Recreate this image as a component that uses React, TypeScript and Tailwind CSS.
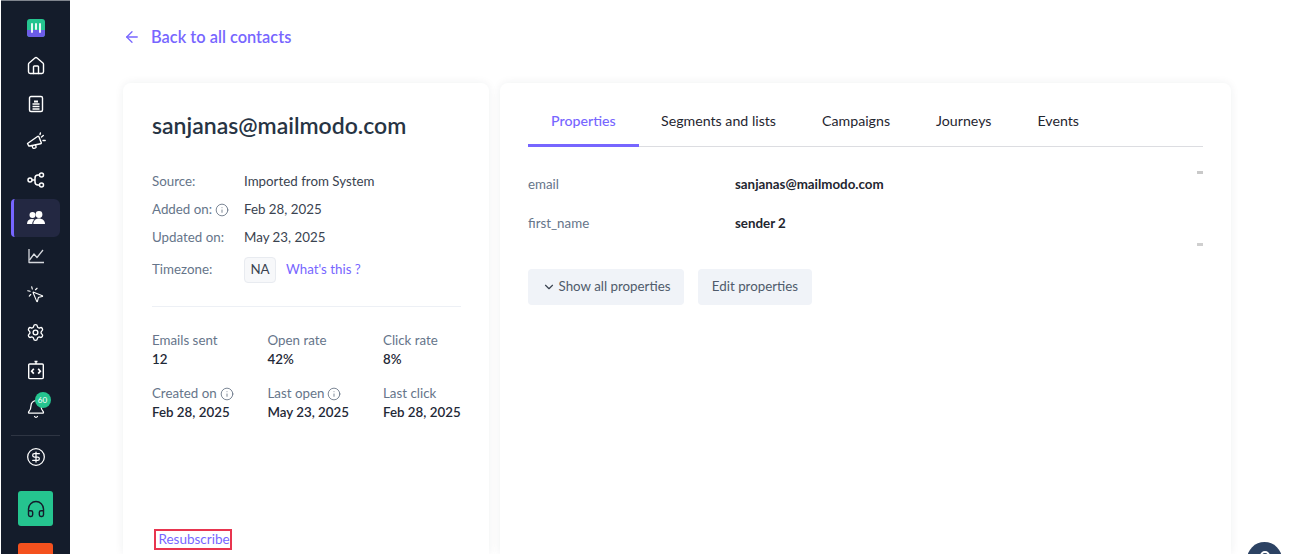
import {
  ArrowLeft,
  Bell,
  ChevronDown,
  CircleDollarSign,
  Headphones,
  House,
  Info,
  MousePointerClick,
  Settings,
} from "lucide-react";
import type { ReactNode } from "react";

function Logo() {
  return (
    <svg width="18" height="18" viewBox="0 0 18 18">
      <rect width="18" height="18" rx="3" fill="#25c48f" />
      <path d="M0 11h18v4a3 3 0 0 1-3 3H3a3 3 0 0 1-3-3z" fill="#6c5ce7" />
      <path d="M5 5v8M9 5v5M13 5v8" stroke="#fff" strokeWidth="1.8" strokeLinecap="round" />
    </svg>
  );
}

function NewsIcon() {
  return (
    <svg width="18" height="18" viewBox="0 0 18 18" fill="none" stroke="#fff" strokeWidth="1.4">
      <rect x="2.5" y="1.5" width="13" height="15" rx="1.5" />
      <path d="M5.5 9h7M5.5 11.5h7M5.5 14h7" />
      <path d="M7 6.5h4" strokeWidth="2" />
    </svg>
  );
}

function MegaphoneIcon() {
  return (
    <svg width="20" height="20" viewBox="0 0 20 20" fill="none" stroke="#fff" strokeWidth="1.4" strokeLinejoin="round" strokeLinecap="round">
      <path d="M1.5 11.5 11.5 4.5q1-.6 1.5.5l2.200 5.500q.4 1-.7 1.200L4 14q-1 .2-1.500-.5z" />
      <path d="M6 13.5l.8 2.300q.3.800 1.200.5l1.500-.5q.8-.3.500-1.200l-.5-1.600" />
      <path d="M15.5 5l1.800-1.500M17 8.500h2.200M14 2.500l.4-1.500" />
    </svg>
  );
}

function FlowIcon() {
  return (
    <svg width="18" height="18" viewBox="0 0 18 18" fill="none" stroke="#fff" strokeWidth="1.5">
      <circle cx="3" cy="9" r="2" />
      <circle cx="14.5" cy="4" r="2" />
      <circle cx="14.5" cy="14" r="2" />
      <path d="M5 9h3M12.5 4H11a3 3 0 0 0-3 3v4a3 3 0 0 0 3 3h1.500" />
    </svg>
  );
}

function UsersIcon() {
  return (
    <svg width="18" height="18" viewBox="0 0 18 18" fill="#fff">
      <circle cx="5.5" cy="6" r="3" />
      <circle cx="12" cy="5.5" r="3.4" />
      <path d="M0 15c0-3.2 2-5 5-5 1 0 1.700.2 2.400.6C6 11.700 5.300 13.200 5.300 15z" />
      <path d="M6.3 15c0-3.2 2.400-5.400 5.700-5.400S18 11.800 18 15z" />
    </svg>
  );
}

function ChartIcon() {
  return (
    <svg width="20" height="20" viewBox="0 0 20 20" fill="none" stroke="#d5d8dd" strokeWidth="1.3" strokeLinejoin="round">
      <path d="M3 3v13.500h15" />
      <path d="M3.5 14 8 8l3 3.500L17 4" />
    </svg>
  );
}

function CodeIcon() {
  return (
    <svg width="20" height="20" viewBox="0 0 20 20" fill="none" stroke="#fff" strokeWidth="1.4">
      <rect x="2.7" y="4" width="14.6" height="14.6" rx="1" />
      <path d="M10 1.5V4M8.500 1.500h3" />
      <path d="M7.8 8.800 5.700 11.200l2.100 2.400M12.200 8.800l2.100 2.400-2.100 2.400" strokeWidth="1.7" />
    </svg>
  );
}

function NavItem({ children, active }: { children: ReactNode; active?: boolean }) {
  return (
    <div
      className={
        active
          ? "h-[38px] w-[49px] shrink-0 flex items-center justify-center rounded-r-md rounded-l-sm bg-[#232842] border-l-[3px] border-[#7766ff] pr-[3px]"
          : "h-[38px] w-[49px] shrink-0 flex items-center justify-center"
      }
    >
      {children}
    </div>
  );
}

function Tip() {
  return <Info size={14} strokeWidth={1.4} className="text-[#5f6c7e] inline-block" />;
}

function DetailRow({ label, tip, children }: { label: string; tip?: boolean; children: ReactNode }) {
  return (
    <div className="flex items-center h-7">
      <div className="w-[92px] text-[#66758a] flex items-center gap-[3px]">
        {label}
        {tip && <Tip />}
      </div>
      <div className="text-[#3a4350] flex items-center">{children}</div>
    </div>
  );
}

function Stat({ label, value, tip }: { label: string; value: string; tip?: boolean }) {
  return (
    <div>
      <div className="text-[#66758a] h-[19px] leading-[19px] flex items-center gap-[3px]">
        {label}
        {tip && <Tip />}
      </div>
      <div className="text-[#1f2937] font-semibold h-[19px] leading-[19px] whitespace-nowrap">{value}</div>
    </div>
  );
}

const tabs = ["Segments and lists", "Campaigns", "Journeys", "Events"];

export default function App() {
  return (
    <div className="relative h-[554px] w-[1300px] overflow-hidden bg-white flex text-[13.33px] font-['Lato',sans-serif]">
      <aside className="w-[69px] ml-px h-full overflow-hidden bg-[#141c2b] border-t border-[#80858e] flex flex-col items-center pt-[8px] shrink-0">
        <NavItem><Logo /></NavItem>
        <NavItem><House size={20} color="#fff" strokeWidth={1.7} /></NavItem>
        <NavItem><NewsIcon /></NavItem>
        <NavItem><MegaphoneIcon /></NavItem>
        <NavItem><FlowIcon /></NavItem>
        <NavItem active><UsersIcon /></NavItem>
        <NavItem><ChartIcon /></NavItem>
        <NavItem><MousePointerClick size={19} color="#fff" strokeWidth={1.4} /></NavItem>
        <NavItem><Settings size={19} color="#fff" strokeWidth={1.7} /></NavItem>
        <NavItem><CodeIcon /></NavItem>
        <NavItem>
          <div className="relative pt-[2px]">
            <Bell size={20} color="#fff" strokeWidth={1.5} />
            <span className="absolute -top-[5px] left-[9px] w-[16px] h-[16px] rounded-full bg-[#25c48f] text-white text-[8px] flex items-center justify-center">
              60
            </span>
          </div>
        </NavItem>
        <div className="mt-2 h-px w-[49px] shrink-0 bg-[#2e3543]" />
        <div className="mt-[2px]">
          <NavItem><CircleDollarSign size={20} color="#fff" strokeWidth={1.5} /></NavItem>
        </div>
        <div className="mt-[15px] h-[35px] w-[35px] rounded-[3px] bg-[#25c48f] flex items-center justify-center shrink-0">
          <Headphones size={20} color="#141c2b" strokeWidth={1.7} />
        </div>
        <div className="mt-[17px] h-[35px] w-[35px] rounded-[3px] bg-[#f4511e] shrink-0" />
      </aside>

      <main className="flex-1 pl-[53px] pr-[69px] flex flex-col min-w-0">
        <div className="h-[83px] shrink-0 flex items-center gap-[10px] pb-[9px] text-[#7766ff]">
          <ArrowLeft size={18} strokeWidth={1.7} />
          <span className="text-[16.4px] font-semibold">Back to all contacts</span>
        </div>

        <div className="flex-1 flex gap-[11px] min-h-0">
          <section className="w-[366px] rounded-t-lg bg-white shadow-[0_0_10px_rgba(30,40,60,0.07)] pl-[29px] pr-[28px] flex flex-col">
            <h1 className="pt-[25px] text-[23px] leading-[34px] font-semibold text-[#273444] whitespace-nowrap">
              sanjanas@mailmodo.com
            </h1>
            <div className="mt-[26px]">
              <DetailRow label="Source:">Imported from System</DetailRow>
              <DetailRow label="Added on:" tip>Feb 28, 2025</DetailRow>
              <DetailRow label="Updated on:">May 23, 2025</DetailRow>
              <div className="flex items-center h-[36px]">
                <div className="w-[92px] text-[#66758a]">Timezone:</div>
                <span className="h-[26px] w-8 rounded border border-[#e8ebf0] bg-[#f7f8fa] flex items-center justify-center text-[#3a4350]">
                  NA
                </span>
                <span className="ml-[10px] text-[#7766ff]">What's this ?</span>
              </div>
            </div>
            <div className="mt-[18px] h-px bg-[#edf0f5]" />
            <div className="mt-[24px] grid grid-cols-[115.5px_115.5px_1fr] gap-y-[15px]">
              <Stat label="Emails sent" value="12" />
              <Stat label="Open rate" value="42%" />
              <Stat label="Click rate" value="8%" />
              <Stat label="Created on" value="Feb 28, 2025" tip />
              <Stat label="Last open" value="May 23, 2025" tip />
              <Stat label="Last click" value="Feb 28, 2025" />
            </div>
            <div className="mt-auto mb-[4px] ml-[2px] w-[78px] h-[21px] border-2 border-[#e8354f] flex items-center justify-center pl-[2px] text-[13.5px] text-[#7766ff]">
              Resubscribe
            </div>
          </section>

          <section className="flex-1 rounded-t-lg bg-white shadow-[0_0_10px_rgba(30,40,60,0.07)] px-[28px] pt-[19px]">
            <div className="flex h-[45px] border-b border-[#dcdde1] text-[14.2px]">
              <div className="px-[23px] h-[45px] border-b-[3px] border-[#7766ff] text-[#7766ff] font-medium flex items-center pb-[5px]">
                Properties
              </div>
              <div className="flex -ml-[0.7px]">
                {tabs.map((t) => (
                  <div key={t} className="px-[23px] h-[44px] text-[#1f2630] flex items-center pb-[6px]">
                    {t}
                  </div>
                ))}
              </div>
            </div>
            <div className="relative mt-[18px] h-[78px]">
              <div className="flex items-center h-[39px]">
                <div className="w-[207px] text-[#66758a]">email</div>
                <div className="font-bold text-[#1f2630]">sanjanas@mailmodo.com</div>
              </div>
              <div className="flex items-center h-[39px]">
                <div className="w-[207px] text-[#66758a]">first_name</div>
                <div className="font-bold text-[#1f2630]">sender 2</div>
              </div>
              <span className="absolute right-0 top-[6px] w-[6px] h-[3px] bg-[#c9c9c9]" />
              <span className="absolute right-0 top-[78px] w-[6px] h-[3px] bg-[#cfcfcf]" />
            </div>
            <div className="mt-[26px] flex gap-[14px] text-[#4f5b6b]">
              <div className="h-9 w-[156px] rounded bg-[#f0f3f8] flex items-center justify-center gap-[3px]">
                <ChevronDown size={14} strokeWidth={2} className="text-[#3a4350]" />
                Show all properties
              </div>
              <div className="h-9 w-[114px] rounded bg-[#f0f3f8] flex items-center justify-center">
                Edit properties
              </div>
            </div>
          </section>
        </div>
      </main>

      <div className="absolute left-[1247px] top-[542px] w-[35px] h-[35px] rounded-full bg-[#2c4263] flex justify-center pt-[9px]">
        <span className="w-[10px] h-[10px] rounded-full border-2 border-white" />
      </div>
    </div>
  );
}
